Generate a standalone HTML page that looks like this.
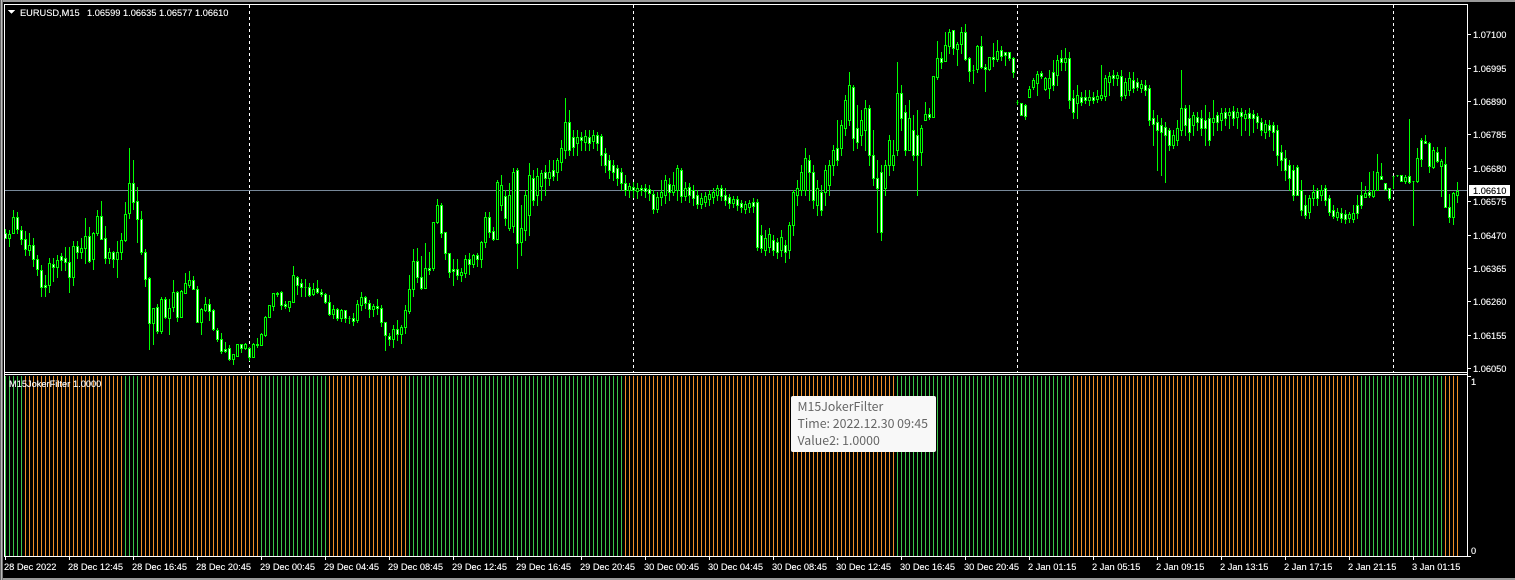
<!DOCTYPE html>
<html><head><meta charset="utf-8"><title>EURUSD,M15</title>
<style>
html,body{margin:0;padding:0;background:#000;width:1515px;height:580px;overflow:hidden}
svg{display:block;position:absolute;left:0;top:0}
text{font-family:"Liberation Sans",sans-serif;font-size:9.25px;fill:#fff;stroke:#fff;stroke-width:.12}
.c{shape-rendering:crispEdges}
.tt{font-family:"Noto Sans CJK SC","Liberation Sans",sans-serif;font-size:12.35px;fill:#666;stroke:none}
</style></head><body>
<svg width="1515" height="580" viewBox="0 0 1515 580">
<defs>
<pattern id="g" patternUnits="userSpaceOnUse" x="1" y="0" width="4" height="10"><rect width="1" height="10" fill="#3cc44a"/></pattern>
<pattern id="o" patternUnits="userSpaceOnUse" x="1" y="0" width="4" height="10"><rect width="1" height="10" fill="#ec8f28"/></pattern>
</defs>
<rect width="1515" height="580" fill="#000"/>
<g class="c">
<rect x="0" y="0" width="1515" height="2" fill="#9a9a9a"/>
<rect x="0" y="578" width="1515" height="2" fill="#9a9a9a"/>
<rect x="0" y="0" width="1" height="580" fill="#666"/>
<rect x="1" y="0" width="1" height="580" fill="#bbb"/>
<rect x="2" y="0" width="1" height="580" fill="#777"/>
<!-- indicator bars -->
<rect x="5" y="376" width="18" height="180" fill="url(#g)"/>
<rect x="25" y="376" width="98" height="180" fill="url(#o)"/>
<rect x="125" y="376" width="14" height="180" fill="url(#g)"/>
<rect x="141" y="376" width="118" height="180" fill="url(#o)"/>
<rect x="261" y="376" width="66" height="180" fill="url(#g)"/>
<rect x="329" y="376" width="78" height="180" fill="url(#o)"/>
<rect x="409" y="376" width="214" height="180" fill="url(#g)"/>
<rect x="625" y="376" width="270" height="180" fill="url(#o)"/>
<rect x="897" y="376" width="174" height="180" fill="url(#g)"/>
<rect x="1073" y="376" width="286" height="180" fill="url(#o)"/>
<rect x="1361" y="376" width="82" height="180" fill="url(#g)"/>
<rect x="1445" y="376" width="14" height="180" fill="url(#o)"/>
<!-- period separators and price line -->
<path d="M249.5 5V372M633.5 5V372M1017.5 5V372M1393.5 5V372" stroke="#fff" stroke-dasharray="3 3" fill="none"/>
<rect x="5" y="190" width="1462" height="1" fill="#778899"/>
<!-- candles -->
<path id="wk" fill="none" stroke="#0f0"/>
<path id="bw" fill="#fff" stroke="#0f0"/>
<path id="bb" fill="#000" stroke="#0f0"/>
<!-- frame -->
<rect x="4" y="4" width="1464" height="1" fill="#fff"/>
<rect x="4" y="372" width="1464" height="1" fill="#fff"/>
<rect x="4" y="374" width="1464" height="1" fill="#fff"/>
<rect x="4" y="556" width="1464" height="1" fill="#fff"/>
<rect x="4" y="4" width="1" height="553" fill="#fff"/>
<rect x="1467" y="4" width="1" height="553" fill="#fff"/>
<!-- price ticks -->
<path d="M1468 34.5h3M1468 68.5h3M1468 101.5h3M1468 134.5h3M1468 168.5h3M1468 201.5h3M1468 235.5h3M1468 268.5h3M1468 301.5h3M1468 335.5h3M1468 368.5h3M1468 376.5h3M1468 556.5h3" stroke="#fff"/>
<!-- time ticks -->
<path d="M5.5 557v3M69.5 557v3M133.5 557v3M197.5 557v3M261.5 557v3M325.5 557v3M389.5 557v3M453.5 557v3M517.5 557v3M581.5 557v3M645.5 557v3M709.5 557v3M773.5 557v3M837.5 557v3M901.5 557v3M965.5 557v3M1029.5 557v3M1093.5 557v3M1157.5 557v3M1221.5 557v3M1285.5 557v3M1349.5 557v3M1413.5 557v3" stroke="#fff"/>
<rect x="1469" y="185" width="41" height="11" fill="#fff"/>
<path d="M8 10h7l-3.5 4z" fill="#fff"/>
</g>
<!-- header -->
<text x="20" y="16">EURUSD,M15</text>
<text x="87" y="16">1.06599</text>
<text x="123" y="16">1.06635</text>
<text x="159" y="16">1.06577</text>
<text x="195" y="16">1.06610</text>
<text x="9" y="387">M15JokerFilter</text>
<text x="73" y="387">1.0000</text>
<!-- price labels -->
<text x="1473" y="38">1.07100</text>
<text x="1473" y="72">1.06995</text>
<text x="1473" y="105">1.06890</text>
<text x="1473" y="138">1.06785</text>
<text x="1473" y="172">1.06680</text>
<text x="1473" y="194" style="fill:#000;stroke:#000">1.06610</text>
<text x="1473" y="205">1.06575</text>
<text x="1473" y="239">1.06470</text>
<text x="1473" y="272">1.06365</text>
<text x="1473" y="305">1.06260</text>
<text x="1473" y="339">1.06155</text>
<text x="1473" y="372">1.06050</text>
<text x="1471" y="385">1</text>
<text x="1471" y="554">0</text>
<!-- time labels -->
<text x="4" y="570">28 Dec 2022</text>
<text x="68" y="570">28 Dec 12:45</text>
<text x="132" y="570">28 Dec 16:45</text>
<text x="196" y="570">28 Dec 20:45</text>
<text x="260" y="570">29 Dec 00:45</text>
<text x="324" y="570">29 Dec 04:45</text>
<text x="388" y="570">29 Dec 08:45</text>
<text x="452" y="570">29 Dec 12:45</text>
<text x="516" y="570">29 Dec 16:45</text>
<text x="580" y="570">29 Dec 20:45</text>
<text x="644" y="570">30 Dec 00:45</text>
<text x="708" y="570">30 Dec 04:45</text>
<text x="772" y="570">30 Dec 08:45</text>
<text x="836" y="570">30 Dec 12:45</text>
<text x="900" y="570">30 Dec 16:45</text>
<text x="964" y="570">30 Dec 20:45</text>
<text x="1028" y="570">2 Jan 01:15</text>
<text x="1092" y="570">2 Jan 05:15</text>
<text x="1156" y="570">2 Jan 09:15</text>
<text x="1220" y="570">2 Jan 13:15</text>
<text x="1284" y="570">2 Jan 17:15</text>
<text x="1348" y="570">2 Jan 21:15</text>
<text x="1412" y="570">3 Jan 01:15</text>
<!-- tooltip -->
<rect x="791" y="396" width="145" height="56" rx="2" fill="#f8f8f8"/>
<text class="tt" x="797.5" y="411">M15JokerFilter</text>
<text class="tt" x="797.5" y="428">Time: 2022.12.30 09:45</text>
<text class="tt" x="797.5" y="445">Value2: 1.0000</text>
</svg>
<script>
var D="229 238 233 238 w,230 246 234 238 b,210 233 217 233 b,212 233 217 229 w,226 244 230 239 w,231 255 239 249 w,233 255 245 250 b,238 266 245 259 w,255 275 259 269 w,265 296 270 287 w,275 296 285 287 w,258 292 263 285 b,258 281 264 267 w,255 277 260 267 b,253 270 256 260 w,247 270 258 262 w,247 292 262 277 w,241 285 246 277 b,241 258 246 252 w,238 258 248 252 b,218 263 236 248 b,227 262 236 261 w,232 269 233 259 b,210 235 216 233 b,201 239 216 239 w,226 263 238 258 w,248 263 252 258 b,251 267 252 259 w,241 277 252 259 b,233 259 240 252 b,202 241 214 240 b,148 218 183 213 b,160 209 183 202 w,187 242 201 219 w,211 254 219 252 w,249 286 252 279 w,277 349 278 323 w,308 344 308 323 b,304 333 307 331 w,297 333 299 331 b,297 318 299 317 w,299 334 308 318 b,280 311 292 307 b,291 321 292 317 w,290 317 291 317 b,273 293 283 293 b,271 287 280 285 b,276 289 280 289 w,286 322 289 322 w,308 334 309 322 b,297 311 304 310 b,299 320 304 311 w,309 330 310 329 w,328 341 330 339 w,333 353 339 351 w,342 352 349 351 w,345 360 348 359 w,354 364 354 359 b,344 356 344 356 b,344 352 344 348 w,343 349 344 348 b,347 360 348 357 w,343 357 344 357 b,338 347 344 345 b,333 345 334 345 b,316 336 317 335 b,305 317 305 317 b,293 310 293 306 b,292 296 293 294 w,291 309 292 305 w,301 308 304 306 w,301 311 301 307 b,266 302 275 302 b,276 294 277 285 w,279 296 283 287 w,279 296 287 287 w,283 296 287 295 w,283 295 289 294 b,280 293 288 292 w,289 296 292 294 w,293 303 294 302 w,295 315 302 314 w,305 318 309 314 b,308 320 309 318 w,309 321 310 318 b,310 322 310 318 w,316 323 318 318 w,313 325 318 321 w,300 322 304 320 b,292 310 297 305 b,296 308 297 303 w,300 317 303 309 w,304 316 306 309 b,299 314 306 308 w,305 326 308 322 w,322 350 322 335 w,333 345 336 339 w,325 347 329 339 b,320 340 329 334 w,325 343 327 334 b,305 333 310 327 b,275 313 289 311 b,249 296 261 289 b,248 282 261 277 w,256 289 277 288 w,243 288 268 288 b,252 274 268 270 w,222 270 222 268 b,199 223 205 222 b,203 237 205 233 w,232 259 232 253 w,253 277 253 272 w,259 285 269 271 w,259 279 269 275 w,268 281 272 275 b,255 277 259 273 b,253 274 259 264 w,254 267 255 264 b,253 266 255 259 w,241 267 242 259 b,212 247 217 242 b,212 237 217 232 w,227 240 231 239 w,180 239 182 239 b,175 210 185 205 b,190 225 196 218 w,183 230 195 228 b,168 232 172 226 b,168 268 170 243 w,205 255 228 242 b,190 240 195 230 b,163 235 175 215 b,170 205 178 200 w,168 205 176 195 b,170 200 173 186 b,165 195 172 178 w,160 185 172 178 b,160 180 170 176 w,158 180 160 172 b,140 170 148 162 b,98 158 122 150 b,110 155 122 150 w,130 155 137 147 w,130 155 137 143 b,132 150 137 140 w,130 150 136 142 b,130 150 137 143 w,130 148 135 141 b,132 150 135 143 w,134 165 136 155 w,148 172 153 165 w,155 178 160 170 w,160 180 165 172 w,165 185 168 178 w,168 190 172 183 w,175 195 183 190 w,183 197 186 190 b,182 197 187 190 w,183 198 188 191 b,185 195 188 190 w,184 197 188 191 w,185 200 189 193 w,190 213 194 209 w,192 212 197 209 b,180 205 192 197 b,175 203 180 195 b,178 200 184 192 w,172 195 185 192 b,165 200 168 190 b,168 202 170 196 w,182 200 188 196 b,183 202 187 195 w,185 205 190 198 w,190 208 195 204 w,193 208 198 204 b,192 206 196 202 b,190 205 194 199 b,188 203 192 197 b,185 200 188 195 b,185 200 188 196 w,188 205 195 200 w,194 208 197 203 w,196 207 199 203 b,196 210 199 205 w,200 212 203 207 w,201 213 204 209 b,200 212 203 207 b,198 212 202 206 w,199 250 202 247 w,225 252 235 248 w,230 255 238 250 b,228 252 234 247 b,235 255 240 250 w,238 258 242 252 w,230 256 237 250 b,240 262 245 252 w,222 258 225 250 b,190 235 192 225 b,180 205 188 195 b,165 195 172 190 b,148 195 158 190 b,155 200 160 172 w,165 208 172 200 w,180 215 188 205 b,185 215 192 210 w,165 205 170 192 b,160 195 165 185 b,145 175 150 165 b,120 165 148 160 w,120 155 125 148 b,95 135 100 128 b,72 125 85 120 b,85 150 87 138 w,105 148 128 142 w,110 145 120 135 b,100 150 108 130 b,105 165 108 155 w,130 185 155 178 w,160 232 178 188 w,165 240 172 232 w,160 195 165 188 b,135 175 140 165 b,140 170 155 165 b,62 155 93 150 b,85 130 93 118 w,105 155 112 150 w,100 150 118 150 b,115 160 130 155 w,110 195 135 155 w,125 165 128 152 b,102 120 114 120 b,108 119 114 117 w,76 117 76 117 b,41 79 58 77 b,52 68 58 62 w,32 61 45 61 b,29 53 32 46 b,30 54 30 48 w,42 65 44 49 b,27 53 32 44 b,24 60 32 59 w,57 81 58 71 w,65 83 70 70 w,45 72 46 69 b,36 68 46 67 w,64 91 67 69 w,57 70 57 69 b,43 66 57 59 w,40 61 51 59 b,46 60 50 56 w,52 65 52 55 w,52 60 52 58 w,57 77 58 72 w,100 104 102 102 w,103 115 103 115 w,104 119 105 116 w,86 97 89 97 b,78 89 80 87 b,71 95 74 83 b,71 78 73 76 w,77 90 78 89 b,70 98 78 88 b,60 90 72 85 w,55 85 60 75 b,50 70 58 62 w,48 70 58 62 b,52 108 58 100 w,90 118 98 112 w,85 118 95 103 b,92 105 97 102 w,90 103 97 100 w,90 105 97 100 b,92 103 97 100 w,90 102 96 99 b,65 100 95 98 b,75 100 78 96 b,72 95 76 82 b,70 85 75 78 w,72 85 75 78 b,70 100 76 96 w,78 98 82 95 b,72 95 78 90 b,72 92 80 88 w,78 90 82 87 w,80 92 84 88 b,80 95 85 90 w,85 125 88 120 w,110 145 118 124 w,115 170 122 130 w,118 175 125 132 w,122 182 127 135 w,128 150 130 145 w,130 148 135 145 b,120 145 128 140 b,70 135 108 130 b,105 135 108 125 w,105 140 118 132 w,112 135 115 125 b,112 130 117 122 w,110 135 118 128 w,105 145 120 128 w,112 145 118 140 w,100 135 118 122 b,112 130 115 122 w,108 130 113 120 b,108 125 112 118 w,108 128 112 115 b,106 125 111 118 w,108 128 112 117 b,108 135 112 116 w,110 130 114 118 b,108 135 113 118 w,110 132 114 118 w,113 128 116 122 w,118 135 122 130 w,120 138 124 132 b,120 136 125 130 w,122 150 125 132 w,125 165 130 155 w,145 170 152 160 w,150 180 158 170 w,160 190 165 178 w,165 200 170 195 w,165 195 167 195 w,180 215 190 210 w,195 218 205 215 w,195 218 198 212 b,185 205 192 198 b,188 205 190 198 w,185 200 190 195 b,185 205 188 200 w,195 215 198 212 w,205 218 210 216 w,208 220 212 217 b,208 222 213 218 w,210 223 214 219 w,212 222 214 218 b,205 222 213 219 b,195 218 205 213 w,182 208 195 205 w,186 197 193 197 b,172 197 192 195 w,171 197 190 196 b,154 190 172 190 b,163 179 176 179 w,183 190 183 189 w,188 200 188 198 w,176 188 176 176 w,175 176 175 175 w,175 181 175 181 w,175 183 177 181 b,119 183 176 182 w,181 225 181 181 w,148 182 158 181 b,138 166 140 159 w,135 143 141 143 w,142 172 143 166 w,147 168 150 167 b,147 162 152 161 w,159 196 161 166 b,147 207 164 207 w,194 222 207 217 w,192 224 193 217 b,182 202 191 195 b";
var W="",A="",B="";
D.split(",").forEach(function(e,i){
  var p=e.split(" "),x=5+4*i,h=+p[0],l=+p[1],t=+p[2],b=+p[3];
  W+="M"+(x+.5)+" "+h+"V"+(l+1);
  var r="M"+(x-.5)+" "+(t+.5)+"h2V"+(b+.5)+"h-2z";
  if(p[4]=="w")A+=r;else B+=r;
});
document.getElementById("wk").setAttribute("d",W);
document.getElementById("bw").setAttribute("d",A);
document.getElementById("bb").setAttribute("d",B);
</script>
</body></html>
